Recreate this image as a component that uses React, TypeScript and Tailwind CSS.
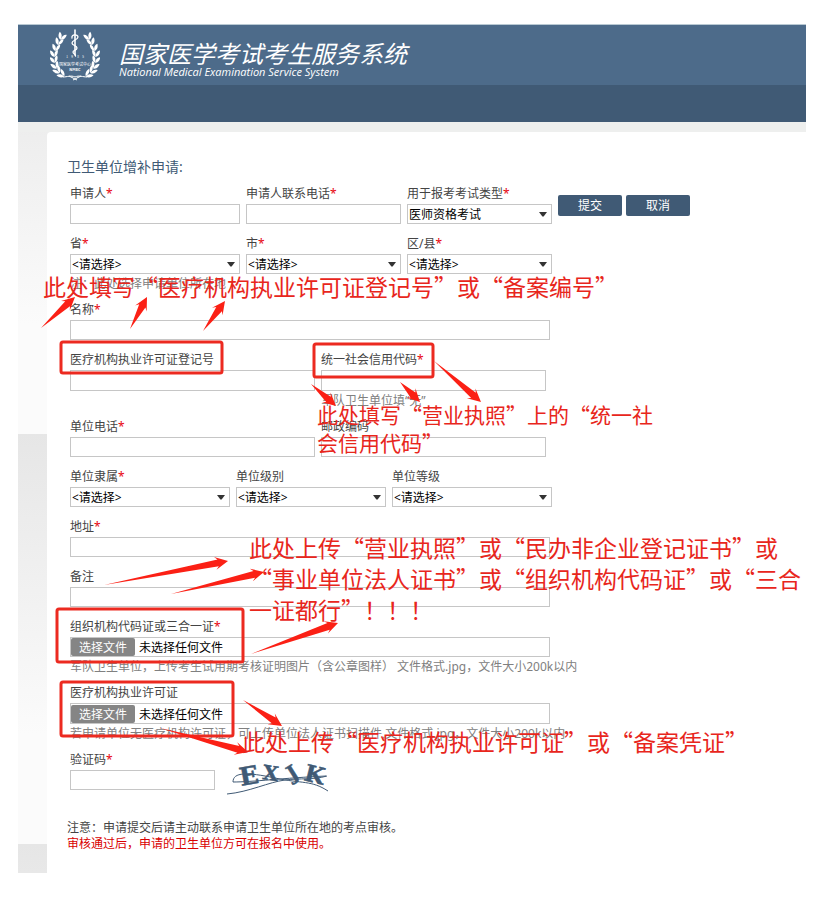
import { useId, type ReactNode } from 'react';

interface FieldProps {
  label: string;
  required?: boolean;
  hint?: string;
  className?: string;
  tall?: boolean;
}

interface SelectFieldProps extends FieldProps {
  value?: string;
}

const EMPTY_OPTION = '<请选择>';

function FieldLabel({ id, label, required }: { id: string; label: string; required?: boolean }) {
  return (
    <label htmlFor={id} className="block h-5 whitespace-nowrap leading-5">
      {label}
      {required && <span className="text-red-600">*</span>}
    </label>
  );
}

function Hint({ children }: { children: ReactNode }) {
  return <p className="h-4 whitespace-nowrap leading-5 text-[#808080]">{children}</p>;
}

function TextField({ label, required, hint, className = '', tall }: FieldProps) {
  const id = useId();
  return (
    <div className={className}>
      <FieldLabel id={id} label={label} required={required} />
      <input
        id={id}
        type="text"
        className={`block w-full border border-[#c6c6c6] bg-white px-1 outline-none ${tall ? 'h-[21px]' : 'h-5'}`}
      />
      {hint && <Hint>{hint}</Hint>}
    </div>
  );
}

function SelectField({ label, required, hint, className = '', value = EMPTY_OPTION }: SelectFieldProps) {
  const id = useId();
  return (
    <div className={className}>
      <FieldLabel id={id} label={label} required={required} />
      <div className="relative">
        <select
          id={id}
          className="block h-5 w-full appearance-none border border-[#c6c6c6] bg-white pl-px pr-5 leading-5 text-black outline-none"
        >
          <option>{value}</option>
        </select>
        <svg viewBox="0 0 8 5" className="pointer-events-none absolute right-[5px] top-2 h-[5px] w-2" fill="#333">
          <path d="M0 0h8L4.6 4.6h-1.2z" />
        </svg>
      </div>
      {hint && <Hint>{hint}</Hint>}
    </div>
  );
}

function FileField({ label, required, hint, className = '', tall }: FieldProps) {
  const id = useId();
  return (
    <div className={className}>
      <FieldLabel id={id} label={label} required={required} />
      <div className={`relative flex items-center border border-[#c6c6c6] ${tall ? 'h-[21px]' : 'h-5'}`}>
        <input id={id} type="file" className="sr-only" />
        <label htmlFor={id} className="h-[18px] w-16 rounded-xs bg-[#858585] text-center leading-5 text-white">
          选择文件
        </label>
        <span className="h-[18px] pl-1 leading-5 text-black">未选择任何文件</span>
      </div>
      {hint && <Hint>{hint}</Hint>}
    </div>
  );
}

// one leaf pair of the laurel: [x, y, angle] on the left branch
const LEAVES = [
  [12, 7, 22],
  [9, 12, 14],
  [6, 18, 4],
  [4, 24, -6],
  [4, 30, -16],
  [5, 36, -28],
  [7, 41, -40],
  [11, 45, -55],
];

function LaurelBranch() {
  return (
    <g>
      {LEAVES.map(([x, y, a]) => (
        <g key={y} transform={`translate(${x} ${y}) rotate(${a})`} fill="#fff">
          <path d="M0 4C-3.800 3-4-1-3.600-3-1-2 .4 0 0 4z" />
          <path d="M0 4C0 0 1.200-2 4-2.800 4.400 0 3 3 0 4z" />
        </g>
      ))}
    </g>
  );
}

function Logo() {
  return (
    <svg viewBox="0 0 50 52" className="h-[52px] w-[50px]" aria-label="国家医学考试中心" role="img">
      <LaurelBranch />
      <g transform="translate(50 0) scale(-1 1)">
        <LaurelBranch />
      </g>
      <g fill="none" stroke="#fff" strokeWidth="1.600" strokeLinecap="round">
        <path d="M25 1v25" />
        <path d="M22 9c-1-4 6-4 6-1s-6 3-6 6 5 2 5 5-4 2-4 4 3 2 2.500 4" strokeWidth="1.300" />
      </g>
      <g fill="#fff" textAnchor="middle" fontFamily='"Noto Sans CJK SC", sans-serif'>
        <text x="17" y="29" fontSize="3">1</text>
        <text x="22" y="29" fontSize="3">9</text>
        <text x="28" y="29" fontSize="3">8</text>
        <text x="33" y="29" fontSize="3">5</text>
        <text x="25" y="37" fontSize="4">国家医学考试中心</text>
        <text x="25" y="42" fontSize="4" fontWeight="700">NMEC</text>
      </g>
      <path d="M13 48c4 0 8-2 12 0 4-2 8 0 12 0M19 47l8 4M31 47l-8 4" stroke="#fff" fill="none" />
    </svg>
  );
}

function Captcha() {
  return (
    <svg viewBox="0 0 104 46" className="h-[46px] w-[104px]" role="img" aria-label="验证码">
      <g fill="#405a75" stroke="#405a75" strokeWidth="0.5" fontFamily='"DejaVu Serif", serif' fontWeight="700">
        <text transform="translate(14 36) rotate(-10)" fontSize="25">E</text>
        <text transform="translate(35 29) rotate(8)" fontSize="20">X</text>
        <text transform="translate(65 31) rotate(-32)" fontSize="20">J</text>
        <text transform="translate(76 30) rotate(14)" fontSize="23">K</text>
      </g>
      <g fill="none" stroke="#405a75">
        <path d="M0 44C22 42 42 32 58 30s28 0 42-4" />
        <path d="M6 32c0-10 14-10 42-4s36 2 53 13" />
        <path d="M6 32c20 0 50-4 93-6" />
      </g>
    </svg>
  );
}

// tail x, tail y, tip x, tip y
const ARROWS = [
  [41, 328, 75, 297],
  [130, 329, 147, 297],
  [203, 331, 225, 301],
  [311, 384, 336, 406],
  [400, 382, 420, 402],
  [434, 361, 481, 402],
  [104, 585, 228, 561],
  [171, 594, 264, 572],
  [251, 654, 338, 623],
  [243, 700, 282, 726],
  [160, 728, 248, 752],
];

function arrowPoints([x1, y1, x2, y2]: number[]) {
  const len = Math.hypot(x2 - x1, y2 - y1);
  const ux = (x2 - x1) / len;
  const uy = (y2 - y1) / len;
  const at = (back: number, side: number) => `${x2 - ux * back - uy * side},${y2 - uy * back + ux * side}`;
  return [`${x1},${y1}`, at(10, 3.5), at(13, 6.5), at(0, 0), at(13, -6.5), at(10, -3.5)].join(' ');
}

// x, y, width, height
const BOXES = [
  [61, 342, 161, 31],
  [314, 344, 119, 33],
  [57, 609, 186, 53],
  [61, 682, 172, 54],
];

function Annotations() {
  return (
    <div className='pointer-events-none absolute inset-0 whitespace-nowrap font-["Noto_Sans_CJK_SC",sans-serif] text-[23px] leading-[31px] text-[#e8261c]'>
      <svg className="absolute inset-0 h-full w-full">
        {BOXES.map(([x, y, w, h]) => (
          <rect key={`${x}-${y}`} x={x} y={y} width={w} height={h} rx="2" fill="none" stroke="#ec2a20" strokeWidth="3" />
        ))}
        {ARROWS.map((a) => (
          <polygon key={a.join('-')} points={arrowPoints(a)} fill="#fb2015" />
        ))}
      </svg>
      <p className="absolute left-[43px] top-[271px]">此处填写“医疗机构执业许可证登记号”或“备案编号”</p>
      <p className="absolute left-[317px] top-[400px] text-[21px] leading-7">
        此处填写“营业执照”上的“统一社
        <br />
        会信用代码”
      </p>
      <p className="absolute left-[249px] top-[532px]">
        此处上传“营业执照”或“民办非企业登记证书”或
        <br />
        “事业单位法人证书”或“组织机构代码证”或“三合
        <br />
        一证都行”！！！
      </p>
      <p className="absolute left-[242px] top-[726px]">此处上传“医疗机构执业许可证”或“备案凭证”</p>
    </div>
  );
}

export default function App() {
  return (
    <div lang="zh-CN" className='relative bg-white py-6 pl-[18px] pr-[25px] font-["Noto_Sans","Noto_Sans_CJK_SC",sans-serif] text-xs text-[#444]'>
      <div className="bg-[repeating-linear-gradient(#e6e6e6_0px,#fbfbfb_300px,#fbfbfb_410px)]">
        <header>
          <div className="flex h-[61px] items-start gap-[19px] border-t border-[#b9c9d3] bg-[#4d6b8a] pl-8 pt-1 text-white">
            <Logo />
            <div className="pt-[11px] italic">
              <h1 className='font-["Noto_Sans_CJK_SC",sans-serif] text-2xl leading-[26px]'>国家医学考试考生服务系统</h1>
              <p className="font-['Open_Sans',sans-serif] text-[11px] font-medium leading-3">
                National Medical Examination Service System
              </p>
            </div>
          </div>
          <div className="h-[37px] bg-[#405a75]" />
          <div className="h-2.5 bg-[#eeefee]" />
        </header>

        <main className="ml-[29px] rounded-tl-sm bg-white pb-[21px] pl-5 pt-[26px]">
          <h2 className="text-sm leading-[18px] text-[#405a75]">卫生单位增补申请:</h2>

          <form className="mt-2 flex flex-col gap-2.5 pl-[3px]" onSubmit={(e) => e.preventDefault()}>
            <div className="flex gap-1.5">
              <TextField label="申请人" required className="w-[170px]" />
              <TextField label="申请人联系电话" required className="w-[155px]" />
              <SelectField label="用于报考考试类型" required value="医师资格考试" className="w-[145px]" />
              <div className="flex gap-1 pt-[11px]">
                <button type="submit" className="h-[21px] w-16 rounded-xs bg-[#405a75] text-white">提交</button>
                <button type="button" className="h-[21px] w-16 rounded-xs bg-[#405a75] text-white">取消</button>
              </div>
            </div>
            <div className="flex gap-1.5">
              <SelectField label="省" required hint="注：此处选择申请单位所在地" className="w-[170px]" />
              <SelectField label="市" required className="w-[155px]" />
              <SelectField label="区/县" required className="w-[145px]" />
            </div>
            <TextField label="名称" required className="w-[480px]" />
            <div className="flex gap-1.5">
              <TextField label="医疗机构执业许可证登记号" tall className="w-[245px]" />
              <TextField label="统一社会信用代码" required tall hint="军队卫生单位填“无”" className="w-[225px]" />
            </div>
            <div className="flex gap-1.5">
              <TextField label="单位电话" required className="w-[245px]" />
              <TextField label="邮政编码" className="w-[225px]" />
            </div>
            <div className="flex gap-1.5">
              <SelectField label="单位隶属" required className="w-40" />
              <SelectField label="单位级别" className="w-[150px]" />
              <SelectField label="单位等级" className="w-40" />
            </div>
            <TextField label="地址" required className="w-[480px]" />
            <TextField label="备注" className="w-[480px]" />
            <FileField
              label="组织机构代码证或三合一证"
              required
              hint="军队卫生单位，上传考生试用期考核证明图片（含公章图样） 文件格式.jpg，文件大小200k以内"
              className="w-[480px]"
            />
            <FileField
              label="医疗机构执业许可证"
              tall
              hint="若申请单位无医疗机构许可证，可上传单位法人证书扫描件,文件格式.jpg，文件大小200k以内"
              className="w-[480px]"
            />
            <div className="flex gap-3">
              <TextField label="验证码" required className="w-[145px]" />
              <Captcha />
            </div>
          </form>

          <div className="mt-6 leading-4">
            <p>注意：申请提交后请主动联系申请卫生单位所在地的考点审核。</p>
            <p className="text-[#d90000]">审核通过后，申请的卫生单位方可在报名中使用。</p>
          </div>
        </main>
      </div>

      <Annotations />
    </div>
  );
}
